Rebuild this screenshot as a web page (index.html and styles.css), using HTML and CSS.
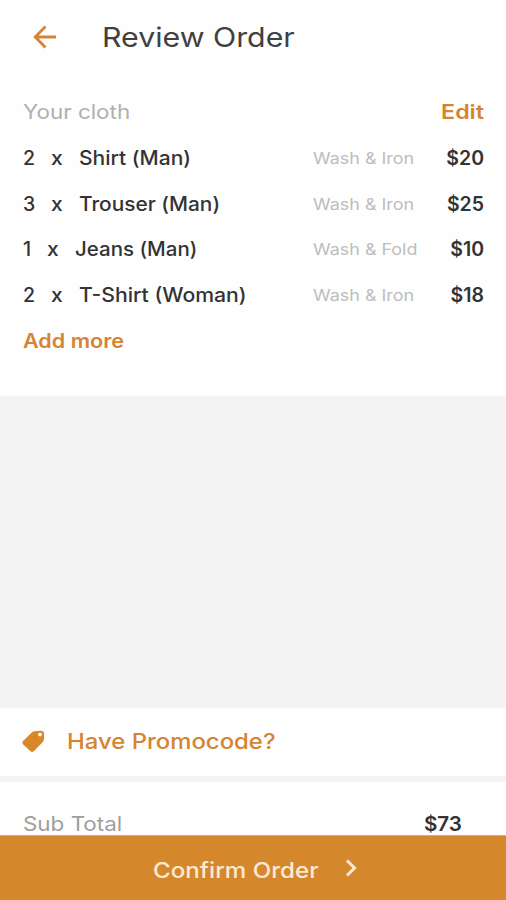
FILE: index.html
```html
<!DOCTYPE html>
<html lang="en">
<head>
<meta charset="utf-8">
<title>Review Order</title>
<link rel="stylesheet" href="styles.css">
</head>
<body>
<div class="screen">
  <header class="topbar">
    <svg class="back" viewBox="0 0 24 24"><path d="M23 12H2.500M12.500 1.500 2.200 12 12.500 22.500"/></svg>
    <h1 class="title"><span class="w">Review Order</span></h1>
  </header>
  <section class="order">
    <div class="head"><span class="label w">Your cloth</span><span class="edit w">Edit</span></div>
    <div class="item"><span class="qty">2</span><span class="times">x</span><span class="name w shirt">Shirt (Man)</span><span class="service w">Wash &amp; Iron</span><span class="price">$20</span></div>
    <div class="item"><span class="qty">3</span><span class="times">x</span><span class="name w trouser">Trouser (Man)</span><span class="service w">Wash &amp; Iron</span><span class="price">$25</span></div>
    <div class="item narrow"><span class="qty">1</span><span class="times">x</span><span class="name w jeans">Jeans (Man)</span><span class="service w">Wash &amp; Fold</span><span class="price">$10</span></div>
    <div class="item"><span class="qty">2</span><span class="times">x</span><span class="name w tshirt">T-Shirt (Woman)</span><span class="service w">Wash &amp; Iron</span><span class="price">$18</span></div>
    <div class="more w">Add more</div>
  </section>
  <section class="promo">
    <svg class="tag" viewBox="0 0 24 24"><path fill-rule="evenodd" d="M13 1.200 19.800.700Q22.800.700 23 3.500L23 9.500Q22.900 11 21.900 12.200L12.300 22.200Q10.500 23.800 8.900 22.200L1 14.800Q-.2 13.200 1.100 11.600L10.200 2.500Q11.500 1.200 13 1.200ZM18.700 2.800a1.900 1.900 0 1 0 .1 0Z"/></svg>
    <span class="w">Have Promocode?</span>
  </section>
  <section class="total"><span class="label w">Sub Total</span><span class="sum w">$73</span></section>
  <footer class="confirm"><span class="w">Confirm Order</span><svg class="chev" viewBox="0 0 12 18"><path d="m2 1.500 7.500 7.500L2 16.500"/></svg></footer>
</div>
</body>
</html>
```
FILE: styles.css
```css
* { box-sizing: border-box; }
body { margin: 0; font-family: Inter, "Liberation Sans", sans-serif; background: #f4f4f4; }
.screen { width: 506px; height: 900px; display: flex; flex-direction: column; background: #f4f4f4; overflow: hidden; }
.w { display: block; white-space: nowrap; transform-origin: left center; }
.topbar { height: 76px; flex: none; display: flex; align-items: center; padding: 0 0 2px 33px; background: #fefefe; }
.back { width: 24px; height: 24px; fill: none; stroke: #d58432; stroke-width: 2.8; }
.title { margin: 0 0 0 45px; padding-top: 1px; font-size: 27px; font-weight: 400; line-height: 36px; color: #404040; }
.title .w { transform: scaleX(1.123); }
.order { height: 320px; flex: none; padding: 14px 22px 0 23px; background: #fefefe; }
.head { height: 46px; display: flex; justify-content: space-between; line-height: 45px; font-size: 20px; }
.label { color: #b0b0b0; transform: scaleX(1.12); }
.edit { font-weight: 600; color: #d58432; transform: scaleX(1.16); transform-origin: right center; }
.item { display: grid; grid-template-columns: 28px 28px 234px 1fr auto; height: 45.500px; line-height: 45.500px; font-size: 19.500px; font-weight: 500; color: #333; }
.narrow { grid-template-columns: 24px 28px 238px 1fr auto; }
.times { transform: scaleX(1.08); transform-origin: left center; }
.shirt { transform: scaleX(1.077); }
.trouser { transform: scaleX(1.068); }
.jeans { transform: scaleX(1.05); }
.tshirt { transform: scaleX(1.087); }
.service { justify-self: start; font-size: 16px; font-weight: 400; color: #bdbdbd; transform: scaleX(1.12); }
.price { font-weight: 600; }
.more { line-height: 47px; font-size: 19.500px; font-weight: 600; color: #d58432; transform: scaleX(1.105); }
.promo { height: 68px; flex: none; margin-top: 312px; padding: 0 0 2px 22px; display: flex; align-items: center; gap: 22px; background: #fefefe; font-size: 22px; font-weight: 500; color: #d58432; }
.promo .w { transform: scaleX(1.086); }
.tag { width: 23px; height: 23px; fill: #d98829; }
.total { height: 53px; flex: none; margin-top: 6px; padding: 21px 44px 0 23px; display: flex; justify-content: space-between; background: #fefefe; font-size: 20px; line-height: 42px; }
.total .label { color: #9e9e9e; }
.sum { font-weight: 600; color: #333; transform: scaleX(1.03); transform-origin: right center; }
.confirm { height: 65px; flex: none; display: flex; align-items: center; padding: 3px 0 0 153px; background: #d5882b; border-top: 1px solid #e3ac70; color: #fbe9d5; font-size: 22px; font-weight: 500; }
.confirm .w { transform: scaleX(1.098); }
.chev { width: 12px; height: 18px; margin: -4px 0 0 41px; fill: none; stroke: #fbe9d5; stroke-width: 3; }
```
